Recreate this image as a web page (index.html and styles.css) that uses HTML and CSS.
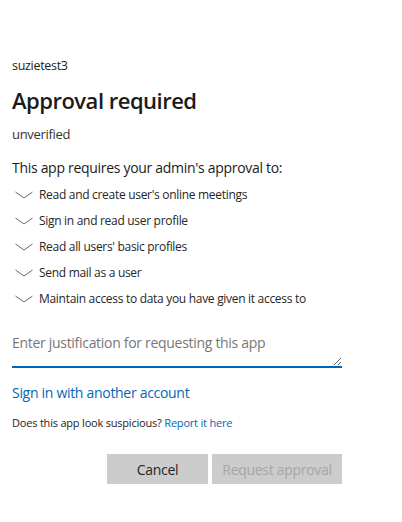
FILE: index.html
```html
<!DOCTYPE html>
<html>
<head>
<meta charset="utf-8">
<link rel="stylesheet" href="styles.css">
</head>
<body>
<main class="panel">
  <div class="account">suzietest3</div>
  <h1 class="title">Approval required</h1>
  <div class="publisher">unverified</div>
  <p class="intro">This app requires your admin's approval to:</p>
  <ul class="perms">
    <li class="perm"><svg class="chev" width="18" height="8" viewBox="0 0 18 8"><path d="M0.5 1 L9 7 L17.5 1" fill="none" stroke="#666" stroke-width="1"/></svg><span>Read and create user's online meetings</span></li>
    <li class="perm"><svg class="chev" width="18" height="8" viewBox="0 0 18 8"><path d="M0.5 1 L9 7 L17.5 1" fill="none" stroke="#666" stroke-width="1"/></svg><span>Sign in and read user profile</span></li>
    <li class="perm"><svg class="chev" width="18" height="8" viewBox="0 0 18 8"><path d="M0.5 1 L9 7 L17.5 1" fill="none" stroke="#666" stroke-width="1"/></svg><span>Read all users' basic profiles</span></li>
    <li class="perm"><svg class="chev" width="18" height="8" viewBox="0 0 18 8"><path d="M0.5 1 L9 7 L17.5 1" fill="none" stroke="#666" stroke-width="1"/></svg><span>Send mail as a user</span></li>
    <li class="perm"><svg class="chev" width="18" height="8" viewBox="0 0 18 8"><path d="M0.5 1 L9 7 L17.5 1" fill="none" stroke="#666" stroke-width="1"/></svg><span>Maintain access to data you have given it access to</span></li>
  </ul>
  <div class="field">
    <textarea class="justify" placeholder="Enter justification for requesting this app"></textarea>
  </div>
  <a class="other" href="#">Sign in with another account</a>
  <p class="suspicious">Does this app look suspicious? <a class="report" href="#">Report it here</a></p>
  <div class="actions">
    <button class="btn">Cancel</button>
    <button class="btn btn-disabled" disabled>Request approval</button>
  </div>
</main>
</body>
</html>
```
FILE: styles.css
```css
html, body {
  margin: 0;
  padding: 0;
  background: #ffffff;
}
body {
  font-family: "Open Sans", "Noto Sans", sans-serif;
  color: #1b1b1b;
}
.panel {
  width: 330px;
  padding: 56px 0 0 12px;
}
.account {
  font-size: 12.5px;
  line-height: 20px;
  letter-spacing: -0.3px;
}
.title {
  margin: 10px 0 0;
  font-size: 22px;
  font-weight: 600;
  line-height: 28px;
  letter-spacing: -0.5px;
}
.publisher {
  margin-top: 10px;
  font-size: 13px;
  line-height: 20px;
  color: #333;
  letter-spacing: -0.3px;
}
.intro {
  margin: 14px 0 0;
  font-size: 14px;
  line-height: 20px;
  letter-spacing: -0.3px;
}
.perms {
  list-style: none;
  margin: 3px 0 0;
  padding: 0;
}
.perm {
  display: flex;
  align-items: center;
  height: 26px;
  font-size: 12px;
  color: #262626;
  letter-spacing: -0.3px;
}
.chev {
  margin: 2px 6px 0 3px;
  flex: none;
}
.field {
  margin-top: 18px;
}
.justify {
  display: block;
  box-sizing: border-box;
  width: 330px;
  height: 39px;
  padding: 4px 0;
  border: none;
  border-bottom: 2px solid #0067b8;
  outline: none;
  font-family: "Open Sans", sans-serif;
  font-size: 14px;
  letter-spacing: -0.3px;
  color: #1b1b1b;
  resize: vertical;
}
.justify::placeholder {
  color: #777;
}
.other {
  display: block;
  margin-top: 15px;
  font-size: 14px;
  line-height: 20px;
  color: #0067b8;
  text-decoration: none;
  letter-spacing: -0.3px;
}
.suspicious {
  margin: 12px 0 0;
  font-size: 11px;
  line-height: 16px;
  letter-spacing: -0.2px;
}
.report {
  color: #0067b8;
  text-decoration: none;
}
.actions {
  display: flex;
  justify-content: flex-end;
  gap: 4px;
  margin-top: 23px;
}
.btn {
  height: 30px;
  border: none;
  background: #cccccc;
  font-family: "Open Sans", sans-serif;
  font-size: 14px;
  color: #262626;
  letter-spacing: -0.3px;
  padding: 0;
  width: 101px;
}
.btn-disabled {
  width: 130px;
  color: #a6a6a6;
}
```
